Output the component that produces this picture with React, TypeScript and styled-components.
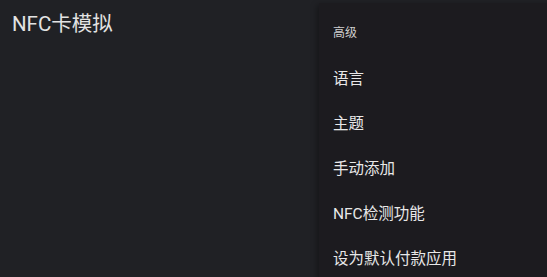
import styled, { createGlobalStyle } from "styled-components";

const GlobalStyle = createGlobalStyle`
  * {
    box-sizing: border-box;
    margin: 0;
    padding: 0;
  }
  body {
    width: 547px;
    height: 277px;
    overflow: hidden;
    background-color: #202125;
    font-family: Roboto, "Noto Sans CJK SC", sans-serif;
  }
`;

const items = ["语言", "主题", "手动添加", "NFC检测功能", "设为默认付款应用"];

export default function App() {
  return (
    <>
      <GlobalStyle />
      <Screen>
        <TopBar>
          <Title>NFC卡模拟</Title>
        </TopBar>
        <Menu>
          <MenuHeader>高级</MenuHeader>
          {items.map((item) => (
            <MenuItem key={item}>{item}</MenuItem>
          ))}
        </Menu>
      </Screen>
    </>
  );
}

const Screen = styled.div`
  position: relative;
  width: 547px;
  height: 277px;
  background-color: #202125;
`;

const TopBar = styled.header`
  height: 48px;
  display: flex;
  align-items: center;
  padding-left: 12px;
`;

const Title = styled.h1`
  color: #e3e3e3;
  font-weight: 400;
  font-size: 20.5px;
  line-height: 1;
`;

const Menu = styled.ul`
  position: absolute;
  left: 319px;
  top: 3px;
  width: 240px;
  padding-top: 6px;
  background-color: #1c1b1f;
  box-shadow: -2px 2px 6px rgba(0, 0, 0, 0.35);
  list-style: none;
`;

const MenuHeader = styled.li`
  height: 45px;
  display: flex;
  align-items: center;
  padding-left: 14px;
  font-size: 12px;
  color: #cfcfcf;
`;

const MenuItem = styled.li`
  height: 45px;
  display: flex;
  align-items: center;
  padding-left: 14px;
  font-size: 15.5px;
  color: #e8e8e8;
`;
